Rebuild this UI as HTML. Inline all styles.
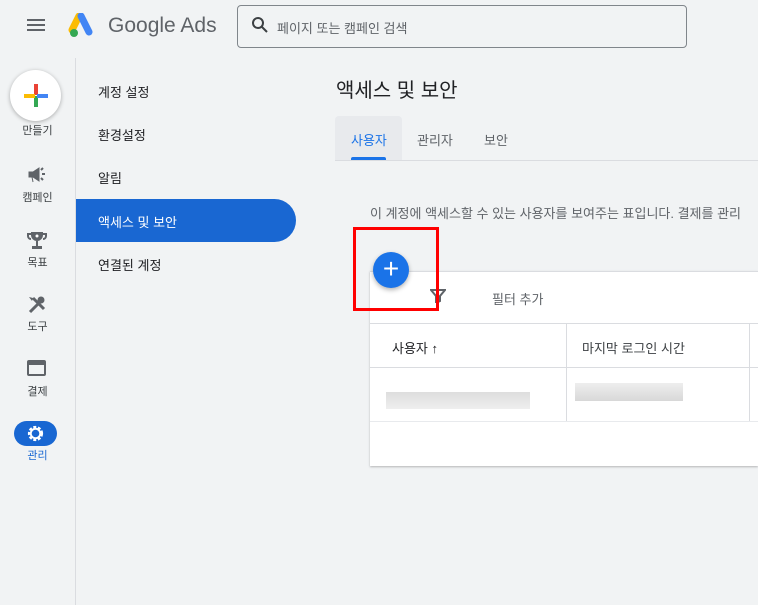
<!DOCTYPE html>
<html><head><meta charset="utf-8"><style>
*{margin:0;padding:0;box-sizing:border-box}
body{width:758px;height:605px;overflow:hidden;background:#f1f3f4;font-family:"Liberation Sans","Noto Sans CJK KR",sans-serif;color:#3c4043;position:relative}
.a{position:absolute}
.rail{font-size:11px;color:#3c4043;text-align:center;width:75px;left:0}
.nav{left:98px;font-size:13px;color:#202124}
</style></head><body>
<div class="a" style="left:27px;top:19px;width:18px;height:2px;background:#5f6368;box-shadow:0 5px 0 #5f6368,0 10px 0 #5f6368"></div>
<svg class="a" style="left:68px;top:13px" width="28" height="26" viewBox="0 0 28 26">
<path d="M11 3 L4 17" stroke="#fbbc04" stroke-width="7" stroke-linecap="round"/>
<path d="M13 3 L21 19" stroke="#4285f4" stroke-width="7" stroke-linecap="round"/>
<circle cx="6" cy="20" r="4" fill="#34a853"/></svg>
<div class="a" style="left:108px;top:14px;font-size:21px;color:#5f6368">Google Ads</div>
<div class="a" style="left:237px;top:5px;width:450px;height:43px;border:1px solid #80868b;border-radius:4px;background:#f1f3f4"></div>
<svg class="a" style="left:251px;top:16px" width="18" height="18" viewBox="0 0 18 18"><circle cx="7" cy="7" r="5" stroke="#3c4043" stroke-width="2" fill="none"/><path d="M11 11 L16 16" stroke="#3c4043" stroke-width="2"/></svg>
<div class="a" style="left:277px;top:18px;font-size:13px;color:#5f6368">페이지 또는 캠페인 검색</div>
<div class="a" style="left:75px;top:58px;width:1px;height:547px;background:#dadce0"></div>
<div class="a" style="left:10px;top:70px;width:51px;height:51px;border-radius:50%;background:#fff;box-shadow:0 1px 4px rgba(0,0,0,.3)"></div>
<div class="a" style="left:34px;top:84px;width:4px;height:11px;background:#ea4335"></div>
<div class="a" style="left:34px;top:96px;width:4px;height:11px;background:#34a853"></div>
<div class="a" style="left:24px;top:94px;width:11px;height:4px;background:#fbbc04"></div>
<div class="a" style="left:37px;top:94px;width:11px;height:4px;background:#4285f4"></div>
<div class="a rail" style="top:122px">만들기</div>
<svg class="a" style="left:27px;top:166px" width="20" height="18" viewBox="0 0 20 18"><path d="M2 6h4l6-4v13l-6-4H2z M5 11l1 5" fill="#5f6368" stroke="#5f6368"/><path d="M15 8h3M14 4l2-2M14 12l2 2" stroke="#5f6368" stroke-width="2"/></svg>
<div class="a rail" style="top:189px">캠페인</div>
<svg class="a" style="left:27px;top:230px" width="20" height="20" viewBox="0 0 20 20"><path d="M4 2h12v3a6 6 0 0 1-12 0z" fill="#5f6368"/><path d="M4 4H1v2a3 3 0 0 0 3 3M16 4h3v2a3 3 0 0 1-3 3" stroke="#5f6368" stroke-width="2" fill="none"/><rect x="9" y="11" width="2" height="5" fill="#5f6368"/><rect x="5" y="16" width="10" height="3" fill="#5f6368"/><circle cx="10" cy="6" r="1.5" fill="#fff"/></svg>
<div class="a rail" style="top:254px">목표</div>
<svg class="a" style="left:27px;top:295px" width="20" height="20" viewBox="0 0 20 20"><path d="M3 17L13 7M6 3l11 11" stroke="#5f6368" stroke-width="3"/><circle cx="14" cy="5" r="3.5" fill="#5f6368"/><path d="M2 2l4 1-1 3z" fill="#5f6368"/></svg>
<div class="a rail" style="top:318px">도구</div>
<div class="a" style="left:27px;top:360px;width:19px;height:16px;border:2px solid #5f6368;border-radius:2px;border-top-width:5px"></div>
<div class="a rail" style="top:383px">결제</div>
<div class="a" style="left:14px;top:421px;width:43px;height:25px;border-radius:13px;background:#1967d2"></div>
<svg class="a" style="left:26px;top:424px" width="19" height="19" viewBox="0 0 20 20"><circle cx="10" cy="10" r="6.5" stroke="#fff" stroke-width="3" stroke-dasharray="3 1.7" fill="none"/><circle cx="10" cy="10" r="5" stroke="#fff" stroke-width="2" fill="none"/></svg>
<div class="a rail" style="top:447px;color:#1967d2">관리</div>
<div class="a nav" style="top:82px">계정 설정</div>
<div class="a nav" style="top:125px">환경설정</div>
<div class="a nav" style="top:168px">알림</div>
<div class="a" style="left:76px;top:199px;width:220px;height:43px;background:#1967d2;border-radius:0 22px 22px 0"></div>
<div class="a nav" style="top:212px;color:#fff">액세스 및 보안</div>
<div class="a nav" style="top:255px">연결된 계정</div>
<div class="a" style="left:336px;top:74px;font-size:20px;color:#202124">액세스 및 보안</div>
<div class="a" style="left:335px;top:116px;width:67px;height:44px;background:#e8eaed;border-radius:4px 4px 0 0"></div>
<div class="a" style="left:335px;top:160px;width:423px;height:1px;background:#dadce0"></div>
<div class="a" style="left:351px;top:157px;width:35px;height:3px;background:#1a73e8;border-radius:2px 2px 0 0"></div>
<div class="a" style="left:351px;top:130px;font-size:13px;color:#1a73e8">사용자</div>
<div class="a" style="left:417px;top:130px;font-size:13px;color:#5f6368">관리자</div>
<div class="a" style="left:484px;top:130px;font-size:13px;color:#5f6368">보안</div>
<div class="a" style="left:370px;top:203px;font-size:13px;color:#5f6368;white-space:nowrap">이 계정에 액세스할 수 있는 사용자를 보여주는 표입니다. 결제를 관리</div>
<div class="a" style="left:370px;top:271px;width:388px;height:195px;background:#fff;border-top:1px solid #dadce0;box-shadow:0 1px 2px rgba(0,0,0,.25)"></div>
<svg class="a" style="left:430px;top:289px" width="16" height="14" viewBox="0 0 16 14"><path d="M1 1h14l-5 6v5l-4 2V7z" fill="none" stroke="#5f6368" stroke-width="2"/></svg>
<div class="a" style="left:492px;top:289px;font-size:13px;color:#5f6368">필터 추가</div>
<div class="a" style="left:370px;top:323px;width:388px;height:1px;background:#dadce0"></div>
<div class="a" style="left:370px;top:367px;width:388px;height:1px;background:#dadce0"></div>
<div class="a" style="left:370px;top:421px;width:388px;height:1px;background:#e8eaed"></div>
<div class="a" style="left:566px;top:323px;width:1px;height:98px;background:#dadce0"></div>
<div class="a" style="left:749px;top:323px;width:1px;height:98px;background:#dadce0"></div>
<div class="a" style="left:392px;top:338px;font-size:13px;color:#202124">사용자 ↑</div>
<div class="a" style="left:582px;top:338px;font-size:13px;color:#3c4043">마지막 로그인 시간</div>
<div class="a" style="left:386px;top:392px;width:144px;height:17px;background:linear-gradient(#ddd,#eee)"></div>
<div class="a" style="left:575px;top:383px;width:108px;height:18px;background:linear-gradient(#eee,#d8d8d8)"></div>
<div class="a" style="left:373px;top:252px;width:36px;height:36px;border-radius:50%;background:#1a73e8;box-shadow:0 2px 5px rgba(0,0,0,.3);color:#fff;font-size:28px;line-height:34px;text-align:center">+</div>
<div class="a" style="left:353px;top:227px;width:86px;height:84px;border:3px solid #f00"></div>
</body></html>
